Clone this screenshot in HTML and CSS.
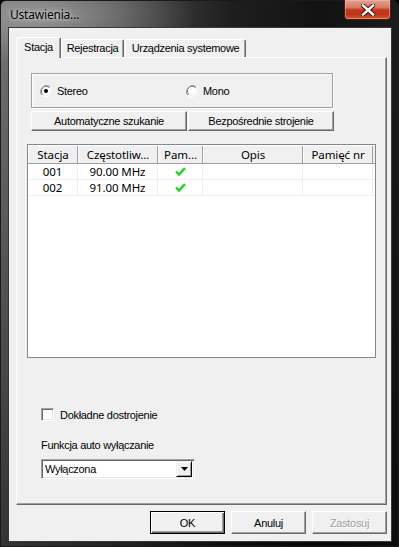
FILE: index.html
```html
<!DOCTYPE html>
<html lang="pl">
<head>
  <meta charset="UTF-8" />
  <title>Ustawienia...</title>
  <link rel="stylesheet" href="styles.css">
</head>
<body>

  <div class="window">

    <!-- Title bar -->
    <div class="titlebar">
      <span class="title">Ustawienia...</span>
      <div class="close-btn">
        <svg width="14" height="12" viewBox="0 0 14 12">
          <path d="M2 1.5 L12 10.5 M12 1.5 L2 10.5" stroke="#3a1410" stroke-width="4.4" stroke-linecap="square" fill="none"/>
          <path d="M2 1.5 L12 10.5 M12 1.5 L2 10.5" stroke="#fff" stroke-width="2.4" stroke-linecap="square" fill="none"/>
        </svg>
      </div>
    </div>

    <div class="client">

      <!-- Tabs -->
      <div class="tabs">
        <div class="tab active">Stacja</div>
        <div class="tab">Rejestracja</div>
        <div class="tab">Urządzenia systemowe</div>
      </div>

      <div class="panel">

        <div class="groupbox">
          <label class="radio stereo">
            <svg class="radio-icon" width="12" height="12" viewBox="0 0 12 12">
              <path d="M10.2 1.8 A6 6 0 0 0 1.8 10.2" stroke="#a0a0a0" fill="none"/>
              <path d="M9.5 2.5 A5 5 0 0 0 2.5 9.5" stroke="#696969" fill="none"/>
              <path d="M1.8 10.2 A6 6 0 0 0 10.2 1.8" stroke="#fff" fill="none"/>
              <circle cx="6" cy="6" r="4" fill="#fff"/>
              <circle cx="6" cy="6" r="2" fill="#000"/>
            </svg>
            Stereo
          </label>
          <label class="radio">
            <svg class="radio-icon" width="12" height="12" viewBox="0 0 12 12">
              <path d="M10.2 1.8 A6 6 0 0 0 1.8 10.2" stroke="#a0a0a0" fill="none"/>
              <path d="M9.5 2.5 A5 5 0 0 0 2.5 9.5" stroke="#696969" fill="none"/>
              <path d="M1.8 10.2 A6 6 0 0 0 10.2 1.8" stroke="#fff" fill="none"/>
              <circle cx="6" cy="6" r="4" fill="#fff"/>
            </svg>
            Mono
          </label>
        </div>

        <div class="btn-row">
          <div class="btn btn-auto">Automatyczne szukanie</div>
          <div class="btn btn-direct">Bezpośrednie strojenie</div>
        </div>

        <!-- Station list -->
        <div class="listview">
          <div class="lv-row lv-header">
            <div class="lv-cell c1">Stacja</div>
            <div class="lv-cell c2">Częstotliw...</div>
            <div class="lv-cell c3">Pam...</div>
            <div class="lv-cell c4">Opis</div>
            <div class="lv-cell c5">Pamięć nr</div>
          </div>
          <div class="lv-row">
            <div class="lv-cell c1">001</div>
            <div class="lv-cell c2">90.00 MHz</div>
            <div class="lv-cell c3">
              <svg width="11" height="9" viewBox="0 0 11 9"><path d="M1 4.5 L4 7.5 L10 1.2" stroke="#1ed21e" stroke-width="2.4" fill="none"/></svg>
            </div>
            <div class="lv-cell c4"></div>
            <div class="lv-cell c5"></div>
          </div>
          <div class="lv-row">
            <div class="lv-cell c1">002</div>
            <div class="lv-cell c2">91.00 MHz</div>
            <div class="lv-cell c3">
              <svg width="11" height="9" viewBox="0 0 11 9"><path d="M1 4.5 L4 7.5 L10 1.2" stroke="#1ed21e" stroke-width="2.4" fill="none"/></svg>
            </div>
            <div class="lv-cell c4"></div>
            <div class="lv-cell c5"></div>
          </div>
        </div>

        <label class="checkbox">
          <span class="check-box"></span>
          Dokładne dostrojenie
        </label>

        <div class="field-label">Funkcja auto wyłączanie</div>
        <div class="combo">
          <span class="combo-text">Wyłączona</span>
          <span class="combo-btn">
            <svg width="7" height="4" viewBox="0 0 7 4"><path d="M0 0 H7 L3.5 4 Z" fill="#000"/></svg>
          </span>
        </div>

      </div>

      <!-- Dialog buttons -->
      <div class="dialog-buttons">
        <div class="btn btn-dialog default">OK</div>
        <div class="btn btn-dialog">Anuluj</div>
        <div class="btn btn-dialog disabled">Zastosuj</div>
      </div>

    </div>
  </div>

</body>
</html>
```

FILE: styles.css
```css
/* Reset & Base */
* {
  margin: 0;
  padding: 0;
  box-sizing: border-box;
}
html, body {
  width: 399px;
  height: 547px;
  overflow: hidden;
  background: #000;
  font-family: 'Liberation Sans', Arial, sans-serif;
  font-size: 11px;
  letter-spacing: -0.3px;
  color: #000;
}

/* Window frame */
.window {
  width: 399px;
  height: 547px;
  display: flex;
  flex-direction: column;
  padding: 0 7px 5px 8px;
  border: 1px solid #1a1a1a;
  border-radius: 6px 6px 0 0;
  background:
    radial-gradient(ellipse 150px 50px at 45px 14px, rgba(180,180,180,0.6), rgba(180,180,180,0) 100%),
    linear-gradient(to bottom, rgba(0,0,0,0) 20px, rgba(0,0,0,0.55) 547px),
    linear-gradient(to right, #727272 0, #4e4e4e 110px, #1e1e1e 230px, #121212 320px, #1c1c1c 399px);
}

/* Title bar */
.titlebar {
  height: 27px;
  display: flex;
  justify-content: space-between;
  align-items: flex-start;
  flex-shrink: 0;
}
.title {
  font-family: 'Noto Sans', sans-serif;
  font-size: 12px;
  letter-spacing: -0.2px;
  padding: 5px 0 0 1px;
  color: #000;
  text-shadow: 0 0 6px rgba(230,230,230,0.8), 0 0 3px rgba(230,230,230,0.8);
}
.close-btn {
  width: 47px;
  height: 20px;
  margin-top: -1px;
  border: 1px solid #4a1a12;
  border-top: none;
  border-radius: 0 0 4px 4px;
  background: linear-gradient(#e3a294 0, #d57a64 40%, #c2391d 52%, #b8341b 75%, #d9582f 100%);
  box-shadow: inset 0 0 0 1px rgba(255,200,180,0.45);
  display: flex;
  align-items: center;
  justify-content: center;
}

/* Client area */
.client {
  flex: 1;
  background: #f0f0f0;
  padding: 9px 6px 0 7px;
  box-shadow: 0 0 0 1px #3a3a3a;
}

/* Tabs */
.tabs {
  display: flex;
  align-items: flex-end;
  height: 20px;
  position: relative;
  z-index: 1;
}
.tab {
  height: 18px;
  line-height: 16px;
  text-align: center;
  white-space: nowrap;
  background: #f0f0f0;
  border: 1px solid #fff;
  border-right-color: #696969;
  border-bottom: none;
  border-radius: 2px 2px 0 0;
  box-shadow: inset -1px 0 0 #a0a0a0;
}
.tab.active {
  width: 45px;
  height: 21px;
  margin-bottom: -1px;
  line-height: 18px;
}
.tab:nth-child(2) { width: 63px; }
.tab:nth-child(3) { width: 121px; margin-left: 1px; }

/* Panel */
.panel {
  width: 371px;
  height: 448px;
  border: 1px solid;
  border-color: #fff #696969 #696969 #fff;
  box-shadow: inset -1px -1px 0 #a0a0a0;
  display: flex;
  flex-direction: column;
  align-items: flex-start;
}

.groupbox {
  margin: 15px 0 0 14px;
  width: 302px;
  height: 35px;
  border: 1px solid #a0a0a0;
  box-shadow: inset 1px 1px 0 #fff, 1px 1px 0 #fff;
  display: flex;
  align-items: center;
  padding-left: 8px;
}
.radio {
  display: flex;
  align-items: center;
  gap: 5px;
}
.radio.stereo { width: 146px; }

/* Buttons */
.btn {
  height: 20px;
  display: flex;
  align-items: center;
  justify-content: center;
  background: #f0f0f0;
  border: 1px solid;
  border-color: #fff #696969 #696969 #fff;
  box-shadow: inset -1px -1px 0 #a0a0a0;
}
.btn-row {
  display: flex;
  gap: 1px;
  margin: 3px 0 0 14px;
}
.btn-auto { width: 156px; }
.btn-direct { width: 146px; }

/* List view */
.listview {
  margin: 13px 0 0 10px;
  width: 349px;
  height: 214px;
  background: #fff;
  border: 1px solid #828790;
  font-family: 'Noto Sans', sans-serif;
  font-size: 11.5px;
  letter-spacing: -0.1px;
}
.lv-row {
  display: flex;
  height: 16px;
  border-bottom: 1px solid #f0f0f0;
}
.lv-header {
  height: 19px;
  background: #f0f0f0;
  border-bottom: 1px solid #a0a0a0;
  border-top: 1px solid #fff;
}
.lv-cell {
  display: flex;
  align-items: center;
  justify-content: center;
  border-right: 1px solid #f0f0f0;
}
.lv-header .lv-cell {
  border-right: 1px solid #a0a0a0;
  border-left: 1px solid #fff;
}
.c1 { width: 50px; }
.c2 { width: 80px; }
.c3 { width: 45px; }
.c4 { width: 100px; }
.c5 { width: 70px; }

/* Checkbox */
.checkbox {
  margin: 50px 0 0 24px;
  display: flex;
  align-items: center;
  gap: 6px;
}
.check-box {
  width: 13px;
  height: 13px;
  background: #fff;
  border: 1px solid;
  border-color: #a0a0a0 #fff #fff #a0a0a0;
  box-shadow: inset 1px 1px 0 #696969, inset -1px -1px 0 #e3e3e3;
}

.field-label {
  margin: 17px 0 0 24px;
  line-height: 14px;
}

/* Combo box */
.combo {
  margin: 7px 0 0 24px;
  width: 154px;
  height: 20px;
  background: #fff;
  border: 1px solid;
  border-color: #a0a0a0 #fff #fff #a0a0a0;
  box-shadow: inset 1px 1px 0 #696969, inset -1px -1px 0 #e3e3e3;
  display: flex;
  align-items: center;
  justify-content: space-between;
  padding: 2px 2px 2px 3px;
}
.combo-btn {
  width: 16px;
  height: 16px;
  background: #f0f0f0;
  border: 1px solid;
  border-color: #f0f0f0 #000 #000 #f0f0f0;
  box-shadow: inset 1px 1px 0 #fff, inset -1px -1px 0 #a0a0a0;
  display: flex;
  align-items: center;
  justify-content: center;
}

/* Dialog buttons */
.dialog-buttons {
  display: flex;
  justify-content: flex-end;
  gap: 6px;
  margin-top: 6px;
  width: 371px;
}
.btn-dialog {
  width: 75px;
  height: 23px;
}
.btn-dialog.default {
  border-color: #000;
  box-shadow: inset 1px 1px 0 #fff, inset -1px -1px 0 #696969, inset -2px -2px 0 #a0a0a0;
}
.btn-dialog.disabled {
  color: #a0a0a0;
  text-shadow: 1px 1px 0 #fff;
}
```
